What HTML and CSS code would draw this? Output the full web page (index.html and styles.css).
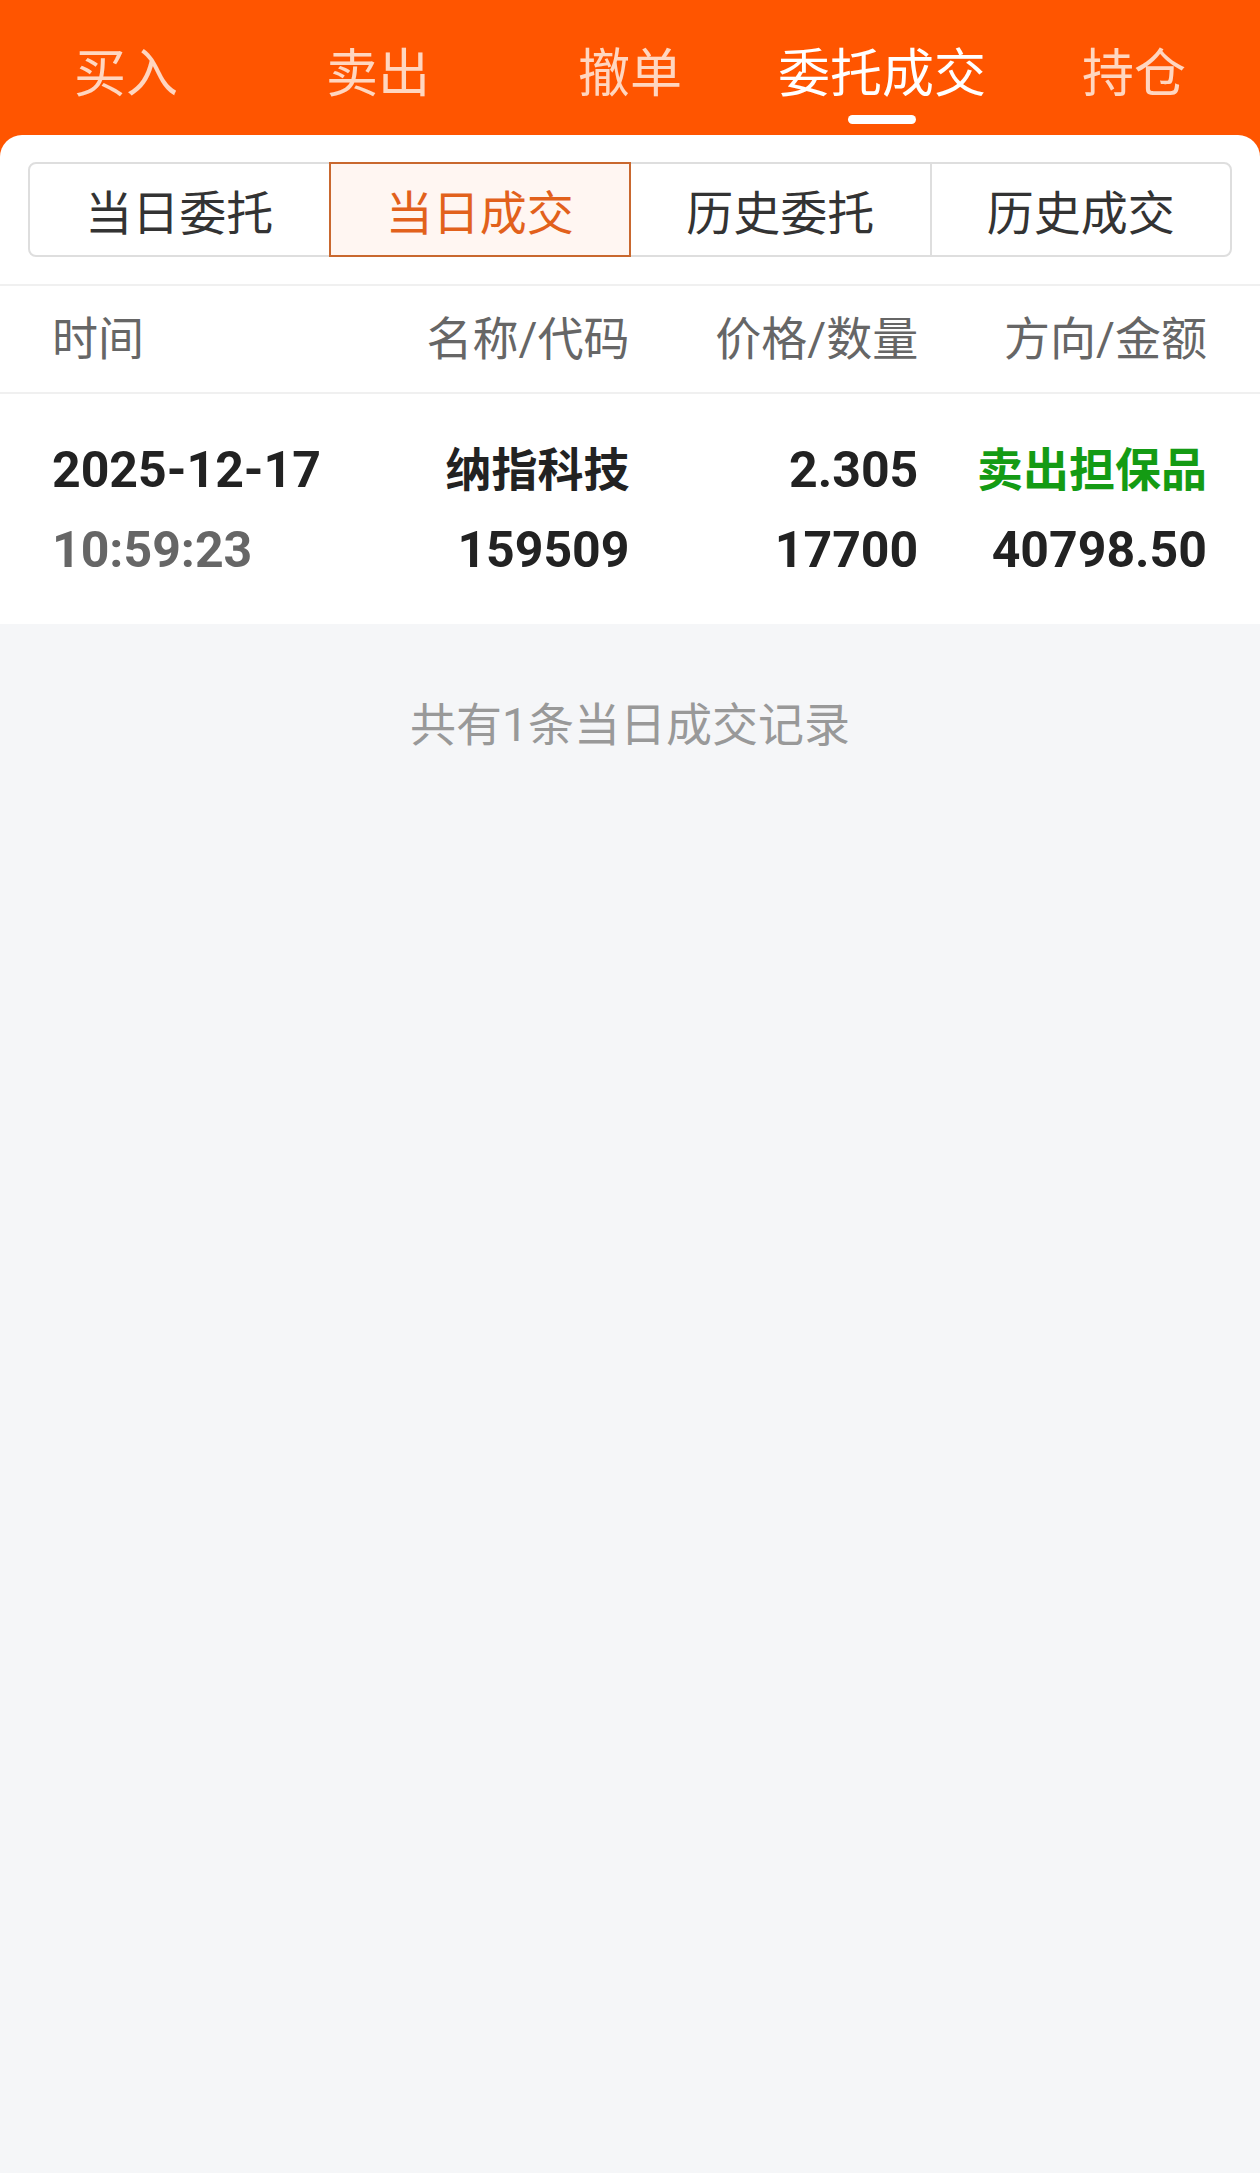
FILE: index.html
```html
<!DOCTYPE html>
<html lang="zh-CN">
<head>
    <meta charset="UTF-8">
    <meta name="viewport" content="width=device-width, initial-scale=1.0">
    <title>委托成交</title>
    <link rel="stylesheet" href="styles.css">
</head>
<body>
    <!-- 顶部橙色导航 -->
    <div class="top">
        <div class="top_tabs">
            <a href="javascript:;">买入</a>
            <a href="javascript:;">卖出</a>
            <a href="javascript:;">撤单</a>
            <a href="javascript:;" class="on">委托成交</a>
            <a href="javascript:;">持仓</a>
        </div>

        <!-- 白色圆角面板：子选项卡 -->
        <div class="sheet">
            <div class="sub_tabs">
                <a href="javascript:;">当日委托</a>
                <a href="javascript:;" class="on">当日成交</a>
                <a href="javascript:;">历史委托</a>
                <a href="javascript:;">历史成交</a>
            </div>
        </div>
    </div>

    <!-- 表头 -->
    <div class="row thead">
        <div>时间</div>
        <div>名称/代码</div>
        <div>价格/数量</div>
        <div>方向/金额</div>
    </div>

    <!-- 成交记录 -->
    <div class="row item">
        <div>
            <p>2025-12-17</p>
            <p class="gray">10:59:23</p>
        </div>
        <div>
            <p class="cn">纳指科技</p>
            <p>159509</p>
        </div>
        <div>
            <p>2.305</p>
            <p>17700</p>
        </div>
        <div>
            <p class="cn green">卖出担保品</p>
            <p>40798.50</p>
        </div>
    </div>

    <div class="total">共有1条当日成交记录</div>
</body>
</html>
```

FILE: styles.css
```css
*{
    margin: 0;
    padding: 0;
    box-sizing: border-box;
}
body{
    background-color: #f5f6f8;
    font-family: Roboto, "Noto Sans CJK SC", sans-serif;
    color: #222;
}
a{
    text-decoration: none;
    color: inherit;
}

/* 顶部导航 */
.top{
    background-color: #ff5500;
}
.top_tabs{
    height: 135px;
    display: grid;
    grid-template-columns: repeat(5, 1fr);
}
.top_tabs a{
    position: relative;
    text-align: center;
    font-size: 52px;
    line-height: 52px;
    padding-top: 49px;
    color: #ffd6c0;
}
.top_tabs a.on{
    color: #fff;
}
/* 选中下划线 */
.top_tabs a.on::after{
    content: "";
    position: absolute;
    left: 50%;
    top: 115px;
    width: 68px;
    height: 9px;
    margin-left: -34px;
    border-radius: 5px;
    background-color: #fff;
}

.sheet{
    background-color: #fff;
    border-radius: 22px 22px 0 0;
    padding: 27px 28px;
    border-bottom: 2px solid #f0f0f0;
}
.sub_tabs{
    display: flex;
    height: 95px;
}
.sub_tabs a{
    flex: 1;
    display: flex;
    align-items: center;
    justify-content: center;
    font-size: 47px;
    color: #333;
    border: 2px solid #dedede;
    margin-left: -2px;
}
.sub_tabs a:first-child{
    margin-left: 0;
    border-radius: 8px 0 0 8px;
}
.sub_tabs a:last-child{
    border-radius: 0 8px 8px 0;
}
.sub_tabs a.on{
    position: relative;
    color: #e2611c;
    background-color: #fff6f2;
    border-color: #c9682f;
}

/* 表格行 */
.row{
    display: grid;
    grid-template-columns: repeat(4, 1fr);
    padding: 0 53px 0 52px;
    background-color: #fff;
}
.row > div{
    text-align: right;
}
.row > div:first-child{
    text-align: left;
}
.thead{
    height: 108px;
    padding-bottom: 8px;
    align-items: center;
    font-size: 46px;
    color: #666;
    border-bottom: 2px solid #f0f0f0;
}
.item{
    height: 230px;
    padding-top: 44px;
    font-size: 50px;
    font-weight: bold;
}
.item p{
    height: 80px;
    line-height: 64px;
}
.item .cn{
    font-size: 46px;
}
.item .gray{
    color: #666;
}
.item .green{
    color: #149b14;
}

.total{
    text-align: center;
    font-size: 46px;
    color: #999;
    padding-top: 64px;
}
```
